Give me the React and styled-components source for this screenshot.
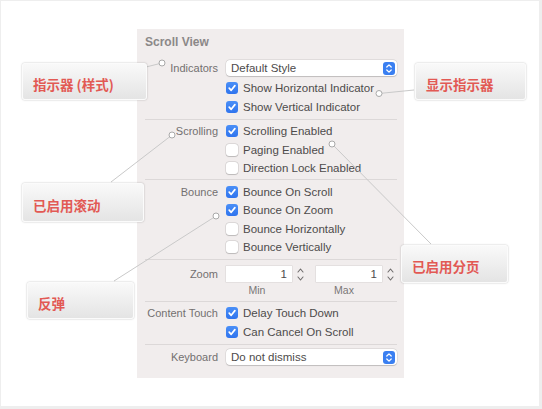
import React from "react";
import styled, { createGlobalStyle } from "styled-components";

const GlobalStyle = createGlobalStyle`
  html, body {
    margin: 0;
    padding: 0;
    background: #eeeeee;
  }
  body {
    font-family: "Liberation Sans", Arial, sans-serif;
  }
`;

const Frame = styled.div`
  position: relative;
  width: 538px;
  height: 405px;
  margin: 1px 0 0 1px;
  background: #ffffff;
  overflow: hidden;
`;

const Panel = styled.div`
  width: 252px;
  height: 343px;
  margin: 28px 0 0 136px;
  padding: 6px 7px 0 8px;
  background: #f1eded;
`;

const Title = styled.div`
  height: 14px;
  line-height: 14px;
  font-size: 12px;
  font-weight: bold;
  color: #8b8888;
  margin-bottom: 5.25px;
`;

const Section = styled.div`
  padding: ${(p) => p.$pt || 2}px 0 ${(p) => p.$pb || 3}px;
  border-bottom: ${(p) => (p.$last ? "none" : "1px solid #dcd8d8")};
`;

const Row = styled.div`
  display: grid;
  grid-template-columns: 73px 1fr;
  column-gap: 8px;
  align-items: center;
  height: ${(p) => p.$h || 18.5}px;
`;

const Label = styled.div`
  text-align: right;
  font-size: 11px;
  color: #737070;
  white-space: nowrap;
`;

const Popup = styled.div`
  grid-column: 2;
  height: 16px;
  display: flex;
  align-items: center;
  justify-content: space-between;
  padding: 0 2px 0 5px;
  background: #ffffff;
  border-radius: 4px;
  box-shadow: 0 0 0 0.5px rgba(0, 0, 0, 0.12), 0 0.5px 1px rgba(0, 0, 0, 0.15);
  font-size: 11.5px;
  color: #4d4b4b;
`;

const CheckLine = styled.label`
  grid-column: 2;
  display: flex;
  align-items: center;
  gap: 5px;
  font-size: 11.5px;
  color: #4d4b4b;
  white-space: nowrap;
`;

const Box = styled.span`
  width: 12px;
  height: 12px;
  border-radius: 3px;
  flex: none;
  display: flex;
  align-items: center;
  justify-content: center;
  background: ${(p) => (p.$on ? "linear-gradient(#4a8ff7, #2f74ee)" : "#ffffff")};
  box-shadow: ${(p) =>
    p.$on ? "none" : "0 0 0 0.5px rgba(0,0,0,0.15), 0 0.5px 1px rgba(0,0,0,0.15)"};
`;

const Fields = styled.div`
  grid-column: 2;
  display: flex;
  align-items: center;
`;

const NumField = styled.div`
  width: 66px;
  height: 16px;
  box-sizing: border-box;
  padding-right: 5px;
  background: #ffffff;
  box-shadow: 0 0 0 0.5px rgba(0, 0, 0, 0.1);
  font-size: 11.5px;
  color: #4d4b4b;
  text-align: right;
  line-height: 16px;
`;

const StepperWrap = styled.div`
  width: 9px;
  margin: 0 ${(p) => p.$mr || 0}px 0 4px;
  display: flex;
  align-items: center;
`;

const Captions = styled.div`
  grid-column: 2;
  display: flex;
  font-size: 10.5px;
  color: #7a7777;
`;

const Caption = styled.div`
  width: ${(p) => p.$w}px;
  text-align: center;
`;

const Callout = styled.div`
  position: absolute;
  left: ${(p) => p.$x}px;
  top: ${(p) => p.$y}px;
  width: ${(p) => p.$w}px;
  height: ${(p) => p.$h}px;
  box-sizing: border-box;
  padding: 4px 0 0 10px;
  display: flex;
  align-items: center;
  border-radius: 3px;
  border: 1px solid #fbfbfb;
  background: linear-gradient(#f9f9f9, #e4e4e4);
  box-shadow: 0 0 2px rgba(0, 0, 0, 0.28);
  font-family: "Noto Sans CJK SC", "Liberation Sans", sans-serif;
  font-size: 13.5px;
  font-weight: bold;
  color: #e25954;
  white-space: nowrap;
`;

const Leaders = styled.svg`
  position: absolute;
  left: 0;
  top: 0;
  pointer-events: none;
`;

const Check = ({ on, children }) => (
  <CheckLine>
    <Box $on={on}>
      {on && (
        <svg width="10" height="10" viewBox="0 0 10 10">
          <path d="M2.2 5.2 L4.2 7.3 L7.9 2.6" fill="none" stroke="#fff" strokeWidth="1.7" strokeLinecap="round" strokeLinejoin="round" />
        </svg>
      )}
    </Box>
    {children}
  </CheckLine>
);

const BlueStepper = () => (
  <svg width="12" height="13" viewBox="0 0 12 13">
    <rect x="0" y="0" width="12" height="13" rx="3" fill="#3a7ff1" />
    <path d="M3.8 5 L6 2.9 L8.2 5" fill="none" stroke="#fff" strokeWidth="1.3" strokeLinecap="round" strokeLinejoin="round" />
    <path d="M3.8 8 L6 10.1 L8.2 8" fill="none" stroke="#fff" strokeWidth="1.3" strokeLinecap="round" strokeLinejoin="round" />
  </svg>
);

const Stepper = ({ mr }) => (
  <StepperWrap $mr={mr}>
    <svg width="9" height="17" viewBox="0 0 9 17">
      <path d="M2 6 L4.5 3 L7 6" fill="none" stroke="#6f6c6c" strokeWidth="1.1" strokeLinecap="round" strokeLinejoin="round" />
      <path d="M2 11 L4.5 14 L7 11" fill="none" stroke="#6f6c6c" strokeWidth="1.1" strokeLinecap="round" strokeLinejoin="round" />
    </svg>
  </StepperWrap>
);

const pins = [
  { cx: 162, cy: 63, x2: 146, y2: 67 },
  { cx: 172, cy: 135, x2: 111, y2: 182 },
  { cx: 379, cy: 93.5, x2: 414, y2: 90 },
  { cx: 216, cy: 216, x2: 114, y2: 281 },
  { cx: 332, cy: 144, x2: 431, y2: 244 },
];

export default function App() {
  return (
    <>
      <GlobalStyle />
      <Frame>
        <Panel>
          <Title>Scroll View</Title>

          <Section $pt={3}>
            <Row $h={21.5}>
              <Label>Indicators</Label>
              <Popup>
                Default Style
                <BlueStepper />
              </Popup>
            </Row>
            <Row>
              <Check on>Show Horizontal Indicator</Check>
            </Row>
            <Row>
              <Check on>Show Vertical Indicator</Check>
            </Row>
          </Section>

          <Section $pb={2}>
            <Row>
              <Label>Scrolling</Label>
              <Check on>Scrolling Enabled</Check>
            </Row>
            <Row>
              <Check>Paging Enabled</Check>
            </Row>
            <Row>
              <Check>Direction Lock Enabled</Check>
            </Row>
          </Section>

          <Section>
            <Row>
              <Label>Bounce</Label>
              <Check on>Bounce On Scroll</Check>
            </Row>
            <Row>
              <Check on>Bounce On Zoom</Check>
            </Row>
            <Row>
              <Check>Bounce Horizontally</Check>
            </Row>
            <Row>
              <Check>Bounce Vertically</Check>
            </Row>
          </Section>

          <Section $pt={4} $pb={4}>
            <Row $h={19.5}>
              <Label>Zoom</Label>
              <Fields>
                <NumField>1</NumField>
                <Stepper mr={11} />
                <NumField>1</NumField>
                <Stepper />
              </Fields>
            </Row>
            <Row $h={13}>
              <Captions>
                <Caption $w={62}>Min</Caption>
                <Caption $w={22} />
                <Caption $w={68}>Max</Caption>
              </Captions>
            </Row>
          </Section>

          <Section>
            <Row>
              <Label>Content Touch</Label>
              <Check on>Delay Touch Down</Check>
            </Row>
            <Row>
              <Check on>Can Cancel On Scroll</Check>
            </Row>
          </Section>

          <Section $last>
            <Row $h={20.5}>
              <Label>Keyboard</Label>
              <Popup>
                Do not dismiss
                <BlueStepper />
              </Popup>
            </Row>
          </Section>
        </Panel>

        <Leaders width="538" height="405" viewBox="1 1 538 405">
          {pins.map((p, i) => (
            <g key={i}>
              <line x1={p.cx} y1={p.cy} x2={p.x2} y2={p.y2} stroke="#c9c9c9" strokeWidth="1" />
              <circle cx={p.cx} cy={p.cy} r="3" fill="#ffffff" stroke="#a9a9a9" strokeWidth="1" />
            </g>
          ))}
        </Leaders>

        <Callout $x={21} $y={62} $w={125} $h={37}>指示器 (样式)</Callout>
        <Callout $x={21} $y={182} $w={122} $h={39}>已启用滚动</Callout>
        <Callout $x={414} $y={62} $w={111} $h={37}>显示指示器</Callout>
        <Callout $x={26} $y={281} $w={107} $h={37}>反弹</Callout>
        <Callout $x={400} $y={244} $w={107} $h={38}>已启用分页</Callout>
      </Frame>
    </>
  );
}
